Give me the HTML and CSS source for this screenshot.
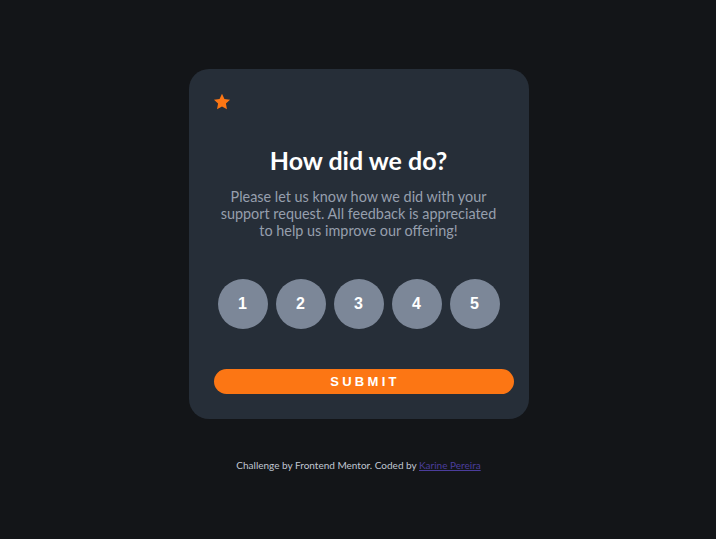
FILE: index.html
```html
<!DOCTYPE html>
<html lang="en">
<head>
<meta charset="utf-8">
<title>Interactive rating component</title>
<link rel="stylesheet" href="styles.css">
</head>
<body>
<main class="page">
  <section class="card">
    <div class="star-badge">
      <svg width="18" height="18" viewBox="0 0 17 16" aria-hidden="true">
        <path fill="#FC7614" d="M8.5 0.3l2.3 4.9 5.3 0.6-3.9 3.7 1 5.3-4.7-2.6-4.7 2.6 1-5.3L0.9 5.8l5.3-0.6z"/>
      </svg>
    </div>
    <h1 class="title">How did we do?</h1>
    <p class="text">Please let us know how we did with your support request. All feedback is appreciated to help us improve our offering!</p>
    <div class="ratings">
      <button class="rate">1</button>
      <button class="rate">2</button>
      <button class="rate">3</button>
      <button class="rate">4</button>
      <button class="rate">5</button>
    </div>
    <button class="submit">SUBMIT</button>
  </section>
  <footer class="attribution">Challenge by Frontend Mentor. Coded by <a href="#" class="attr-link">Karine Pereira</a></footer>
</main>
</body>
</html>
```

FILE: styles.css
```css
* { box-sizing: border-box; }
html, body { margin: 0; padding: 0; }
body {
  background: #131518;
  font-family: "Lato", "Noto Sans", sans-serif;
  width: 716px;
  height: 539px;
}
.page {
  height: 539px;
  display: flex;
  flex-direction: column;
  align-items: center;
  padding-top: 69px;
  padding-left: 1px;
}
.card {
  width: 340px;
  height: 350px;
  background: #262e38;
  border-radius: 20px;
  padding: 24px 24px 25px 24px;
  display: flex;
  flex-direction: column;
}
.star-badge { height: 18px; }
.star-badge svg { display: block; }
.title {
  margin: 35px 0 0 0;
  text-align: center;
  color: #ffffff;
  font-size: 25px;
  line-height: 28px;
  font-weight: 700;
}
.text {
  margin: 14px 0 0 0;
  text-align: center;
  color: #969fad;
  font-size: 14.4px;
  line-height: 17px;
  padding: 0 4px;
}
.ratings {
  margin-top: 40px;
  display: flex;
  justify-content: center;
  gap: 8px;
}
.rate {
  width: 50px;
  height: 50px;
  border-radius: 50%;
  border: none;
  background: #7c8798;
  color: #ffffff;
  font-family: "Liberation Sans", Arial, sans-serif;
  font-weight: 700;
  font-size: 16px;
  padding: 0;
}
.submit {
  margin-top: 40px;
  margin-left: 1px;
  width: 300px;
  height: 25px;
  border: none;
  border-radius: 13px;
  background: #fc7614;
  color: #ffffff;
  font-family: "Liberation Sans", Arial, sans-serif;
  font-weight: 700;
  font-size: 13px;
  letter-spacing: 3.3px;
  padding: 0 0 0 3px;
}
.attribution {
  margin-top: 40px;
  font-size: 10px;
  color: #c0c7d2;
}
.attr-link { color: #4b3d9c; }
```
